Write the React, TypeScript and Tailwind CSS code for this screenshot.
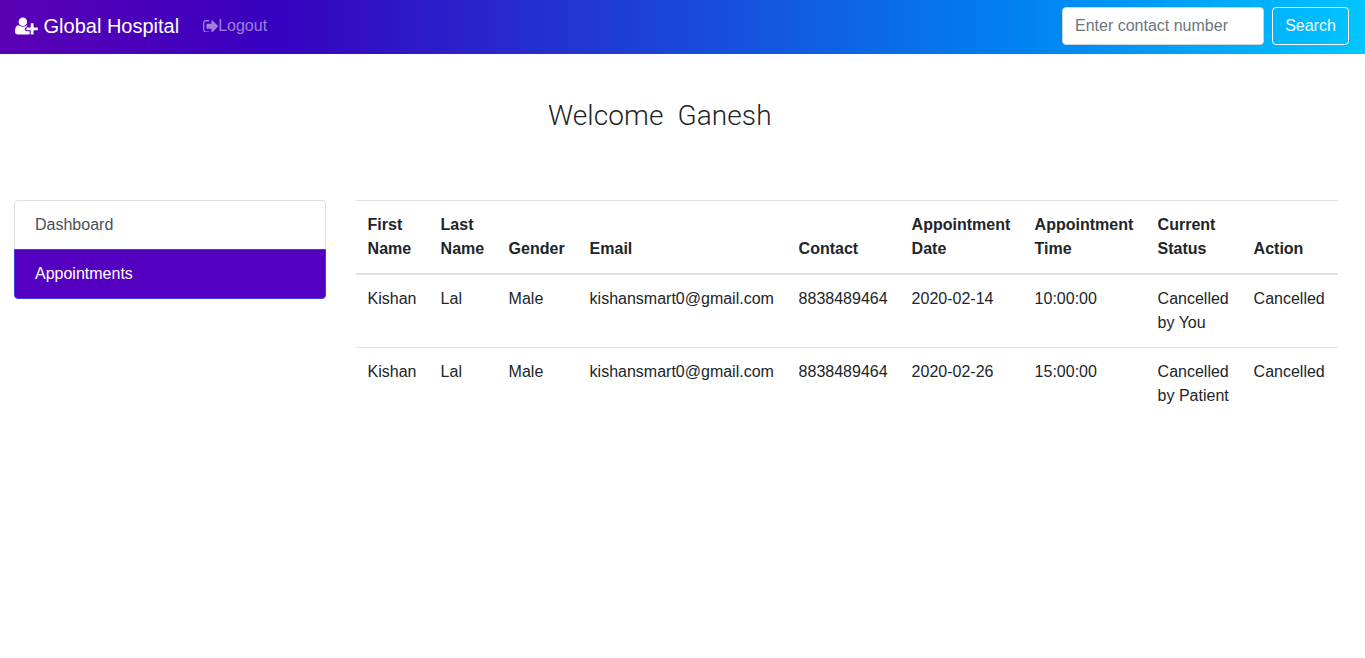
const rows = [
  { date: "2020-02-14", time: "10:00:00", status: "Cancelled by You" },
  { date: "2020-02-26", time: "15:00:00", status: "Cancelled by Patient" },
];

function UserPlusIcon() {
  return (
    <svg viewBox="0 0 2048 1792" className="mr-[5.7px] w-[22.86px] h-[20px] fill-current">
      <path d="M704 896q-159 0-271.500-112.500T320 512t112.500-271.500T704 128t271.500 112.500T1088 512t-112.500 271.500T704 896zm960 128h352q13 0 22.500 9.500t9.500 22.500v192q0 13-9.500 22.500t-22.500 9.500h-352v352q0 13-9.500 22.500t-22.500 9.500h-192q-13 0-22.500-9.500t-9.500-22.500v-352h-352q-13 0-22.500-9.500t-9.500-22.500v-192q0-13 9.500-22.500t22.500-9.500h352V672q0-13 9.500-22.500t22.500-9.500h192q13 0 22.500 9.500t9.500 22.500v352zm-736 224q0 52 38 90t90 38h256v238q-68 50-171 50H267q-121 0-194-69T0 1405q0-53 3.500-103.500t14-109 26.500-108.500 43-97.500 62-81 85.500-53.500 111.500-20q19 0 39 17 154 122 319 122t319-122q20-17 39-17 28 0 57 6-28 27-41 50l-150 168q-38 38-38 90v192z" />
    </svg>
  );
}

function SignOutIcon() {
  return (
    <svg viewBox="0 0 1536 1280" className="w-[15px] h-[12.5px] fill-current">
      <path d="M640 1184q0 8 2 40t-5 53-24 21H293q-121 0-207-86T0 1005V301Q0 180 86 94T293 8h320q13 0 22.500 9.500T645 40q0 8 2 40t-5 53-24 21H293q-66 0-113 47t-47 113v704q0 66 47 113t113 47h312q13 0 22.500 4.500T640 1184zM1536 640q0 26-19 45l-544 544q-19 19-45 19t-45-19-19-45V896H416q-26 0-45-19t-19-45V448q0-26 19-45t45-19h448V96q0-26 19-45t45-19 45 19l544 544q19 19 19 45z" />
    </svg>
  );
}

export default function App() {
  return (
    <div className="min-h-[658px] bg-white font-['Liberation_Sans',Arial,sans-serif] text-[16px] leading-[24px] text-[#212529]">
      <nav className="flex h-[54px] items-center bg-[linear-gradient(to_right,#5c00b4_0%,#3800c0_20%,#1a48d8_50%,#0082f2_75%,#00c6ff_100%)] pl-[15px] pr-[16px] pb-[2px]">
        <a className="flex items-center text-[20px] leading-[30px] text-white">
          <UserPlusIcon />
          Global Hospital
        </a>
        <a className="ml-[24px] flex items-center text-[rgba(255,255,255,0.5)]">
          <SignOutIcon />
          Logout
        </a>
        <form className="ml-auto flex items-center gap-[8px]">
          <input
            placeholder="Enter contact number"
            className="h-[38px] w-[202px] rounded-[4px] border border-[#ced4da] bg-white px-[12px] text-[16px] text-[#495057] placeholder:text-[#6c757d] outline-none"
          />
          <button className="h-[38px] w-[77px] rounded-[4px] border border-[#f8f9fa] text-[16px] text-[#f8f9fa]">
            Search
          </button>
        </form>
      </nav>

      <h3 className="mt-[45px] pl-[548px] font-['Roboto',sans-serif] text-[28px] font-light leading-[34px] tracking-[0.1px] whitespace-pre">
        Welcome  Ganesh
      </h3>

      <div className="mt-[67px] flex items-start">
        <aside className="ml-[14px] w-[312px]">
          <a className="block h-[50px] rounded-t-[4px] border border-[rgba(0,0,0,0.125)] px-[20px] py-[12px] text-[#495057]">
            Dashboard
          </a>
          <a className="-mt-px block h-[50px] rounded-b-[4px] border border-[#3f3fe0] bg-[#5500c1] px-[20px] py-[12px] text-white">
            Appointments
          </a>
        </aside>

        <table className="ml-[29.6px] w-[982px] table-fixed border-collapse">
          <thead>
            <tr className="border-t border-b-2 border-[#dee2e6] align-bottom font-bold">
              <th className="w-[73px] p-[12px] text-left">First Name</th>
              <th className="w-[68px] p-[12px] text-left">Last Name</th>
              <th className="w-[81px] p-[12px] text-left">Gender</th>
              <th className="w-[209px] p-[12px] text-left">Email</th>
              <th className="w-[113px] p-[12px] text-left">Contact</th>
              <th className="w-[123px] p-[12px] text-left">Appointment Date</th>
              <th className="w-[123px] p-[12px] text-left">Appointment Time</th>
              <th className="w-[96px] p-[12px] text-left">Current Status</th>
              <th className="w-[96px] p-[12px] text-left">Action</th>
            </tr>
          </thead>
          <tbody>
            {rows.map((row) => (
              <tr key={row.date} className="border-b border-[#dee2e6] align-top last:border-b-0">
                <td className="p-[12px]">Kishan</td>
                <td className="p-[12px]">Lal</td>
                <td className="p-[12px]">Male</td>
                <td className="p-[12px]">kishansmart0@gmail.com</td>
                <td className="p-[12px]">8838489464</td>
                <td className="p-[12px]">{row.date}</td>
                <td className="p-[12px]">{row.time}</td>
                <td className="p-[12px]">{row.status}</td>
                <td className="p-[12px]">Cancelled</td>
              </tr>
            ))}
          </tbody>
        </table>
      </div>
    </div>
  );
}
